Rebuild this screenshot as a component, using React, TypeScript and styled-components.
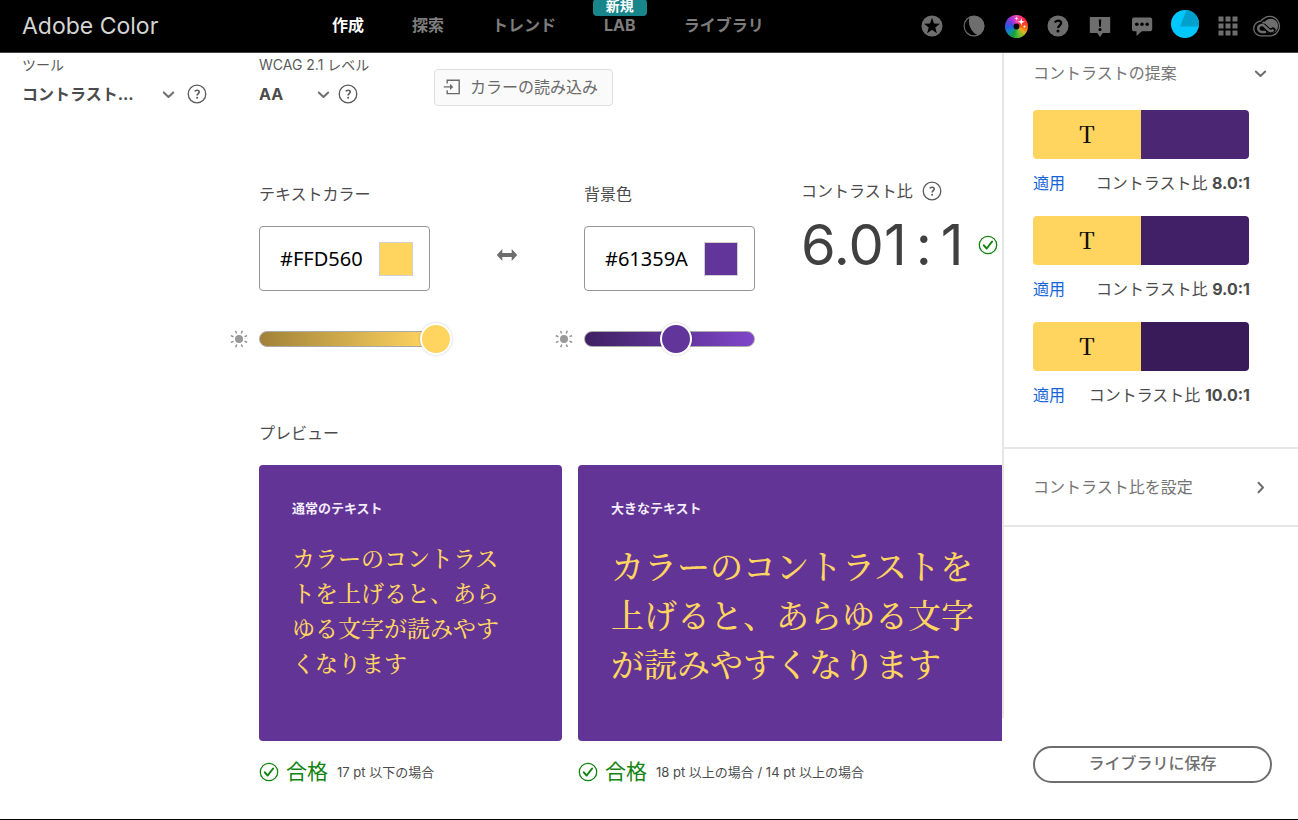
import React, { useState } from "react";
import styled, { createGlobalStyle } from "styled-components";

const sans = `Inter, "Noto Sans CJK JP", sans-serif`;
const mincho = `"Noto Serif CJK JP", "Source Han Serif JP", "Noto Sans CJK JP", serif`;

const GlobalStyle = createGlobalStyle`
  * { box-sizing: border-box; }
  body { margin: 0; background: #fff; color: #4b4b4b; font: 16px/24px ${sans}; }
  button, select, input { font: inherit; color: inherit; }
  button { cursor: pointer; padding: 0; border: 0; background: none; }
  h1, h2, p { margin: 0; font-weight: 400; }
  svg { display: block; flex: none; }
`;

const Page = styled.div`
  display: flex;
  flex-direction: column;
  min-height: 100vh;
  border-bottom: 1px solid #000;
`;

/* Header */

const Header = styled.header`
  display: flex;
  align-items: flex-start;
  height: 53px;
  padding: 0 13px 0 22px;
  overflow: hidden;
  background: #000;
  border-bottom: 1px solid #444;
`;

const Brand = styled.h1`
  flex: 0 0 310px;
  color: #d5d5d5;
  font-size: 23px;
  line-height: 52px;
`;

const Nav = styled.nav`
  display: flex;
  flex: 1;
  gap: 48px;
  height: 50px;
  align-items: center;
`;

const NavLink = styled.a<{ $active?: boolean }>`
  position: relative;
  color: ${(p) => (p.$active ? "#fff" : "#7d7d7d")};
  font-weight: 700;
  text-decoration: none;
  white-space: nowrap;
`;

const Badge = styled.span`
  position: absolute;
  bottom: 21px;
  left: 50%;
  width: 54px;
  margin-left: -27px;
  padding-bottom: 3px;
  border-radius: 4px;
  background: #17858a;
  color: #fff;
  font-size: 14px;
  line-height: 14px;
  text-align: center;
`;

const Actions = styled.div`
  display: flex;
  align-items: center;
  height: 52px;
`;

const ActionButton = styled.button<{ $width?: number }>`
  display: grid;
  place-items: center;
  width: ${(p) => p.$width ?? 42}px;
  height: 44px;
  color: #6e6e6e;
`;

const AvatarButton = styled(ActionButton)`
  padding-bottom: 4px;
`;

const Wheel = styled.span`
  display: block;
  width: 23px;
  height: 23px;
  border-radius: 50%;
  background: conic-gradient(
    #f050b0, #ff2038 50deg, #ff5a10 90deg, #e8b020 125deg,
    #60c030 165deg, #10a040 200deg, #1090b0 230deg, #2060e8 265deg, #6040d8 300deg, #c030d8 335deg, #f050b0
  );
`;

/* Layout */

const Body = styled.div`
  display: flex;
  flex: 1;
`;

const Main = styled.main`
  flex: 1;
  min-width: 0;
  overflow: hidden;
`;

const Toolbar = styled.div`
  display: flex;
  align-items: flex-end;
  padding: 2px 0 0 22px;
`;

const Tool = styled.div<{ $width: number }>`
  flex: 0 0 ${(p) => p.$width}px;
`;

const ToolLabel = styled.label`
  display: block;
  margin-bottom: 7px;
  font-size: 14px;
  line-height: 20px;
  color: #5a5a5a;
`;

const ToolRow = styled.div<{ $gap: number }>`
  display: flex;
  align-items: center;
  gap: ${(p) => p.$gap}px;
`;

const SelectBox = styled.div<{ $width: number }>`
  display: grid;
  align-items: center;
  width: ${(p) => p.$width}px;
  > * { grid-area: 1 / 1; }
  > svg { justify-self: end; pointer-events: none; }
`;

const Select = styled.select`
  width: 100%;
  height: 24px;
  padding: 0;
  border: 0;
  appearance: none;
  background: none;
  font-weight: 700;
`;

const IconButton = styled.button`
  display: grid;
  place-items: center;
  color: #5a5a5a;
`;

const ImportButton = styled.button`
  display: flex;
  align-items: center;
  gap: 9px;
  height: 37px;
  padding: 0 14px 1px 8px;
  border: 1px solid #dedede;
  border-radius: 4px;
  background: #fafafa;
  color: #6a6a6a;
`;

const Workspace = styled.div`
  padding: 76px 0 35px 229px;
`;

const Fields = styled.div`
  display: flex;
  align-items: flex-start;
`;

const Field = styled.div`
  display: grid;
  grid-template-columns: 30px 171px;
  align-items: center;
`;

const FieldLabel = styled.label`
  grid-column: 2;
  margin-bottom: 20px;
`;

const HexBox = styled.div`
  grid-column: 2;
  display: flex;
  align-items: center;
  justify-content: space-between;
  height: 65px;
  margin-bottom: 32px;
  padding: 0 16px 0 20px;
  border: 1px solid #959595;
  border-radius: 4px;
`;

const HexInput = styled.input`
  width: 90px;
  padding: 0;
  border: 0;
  outline: 0;
  background: none;
  color: #000;
  font-family: "Noto Sans", sans-serif;
  font-size: 20px;
`;

const Swatch = styled.span<{ $color: string }>`
  width: 34px;
  height: 34px;
  border: 1px solid #d0d0d0;
  background: ${(p) => p.$color};
`;

const Slider = styled.div`
  display: grid;
  align-items: center;
  > * { grid-area: 1 / 1; }
`;

const Track = styled.span<{ $from: string; $to: string }>`
  height: 16px;
  border: 1px solid #a9a9a9;
  border-radius: 8px;
  background: linear-gradient(90deg, ${(p) => p.$from}, ${(p) => p.$to});
`;

const Range = styled.input<{ $color: string }>`
  width: calc(100% + 22px);
  height: 32px;
  margin: 0;
  appearance: none;
  background: none;
  &::-webkit-slider-thumb {
    appearance: none;
    width: 32px;
    height: 32px;
    border: 2px solid #fff;
    border-radius: 50%;
    background: ${(p) => p.$color};
    box-shadow: 0 0 3px rgba(0, 0, 0, 0.2);
  }
`;

const SwapButton = styled.button`
  display: grid;
  place-items: center;
  flex: 0 0 124px;
  height: 65px;
  margin-top: 40px;
  padding-left: 30px;
  color: #6e6e6e;
`;

const Ratio = styled.div`
  margin: -3px 0 0 46px;
  white-space: nowrap;
`;

const RatioHead = styled.div`
  display: flex;
  align-items: center;
  gap: 9px;
`;

const RatioValue = styled.div`
  display: flex;
  align-items: center;
  gap: 14px;
  margin-top: 7px;
  color: #404040;
  font-size: 56px;
  line-height: 70px;
  font-feature-settings: "calt" 0;
`;

const RatioNumber = styled.span`
  display: flex;
  gap: 9px;
`;

const SectionTitle = styled.h2`
  margin: 66px 0 20px 30px;
  font-size: 16px;
  line-height: 24px;
`;

const Previews = styled.div`
  display: flex;
  gap: 16px;
  padding-left: 30px;
`;

const Preview = styled.section<{ $wide?: boolean }>`
  flex: ${(p) => (p.$wide ? "1 0 456px" : "0 0 303px")};
`;

const Card = styled.div`
  min-height: 276px;
  padding: 33px;
  border-radius: 4px;
  background: #613496;
`;

const CardTitle = styled.p`
  margin-bottom: 22px;
  color: #f3ecfa;
  font-size: 13px;
  line-height: 20px;
  font-weight: 700;
`;

const Sample = styled.p<{ $large?: boolean }>`
  max-width: ${(p) => (p.$large ? 370 : 210)}px;
  color: #ffd560;
  font-family: ${mincho};
  font-size: ${(p) => (p.$large ? 33 : 23)}px;
  line-height: ${(p) => (p.$large ? 49 : 35)}px;
  font-weight: 500;
`;

const Result = styled.div`
  display: flex;
  align-items: center;
  gap: 9px;
  margin-top: 19px;
  font-size: 13px;
`;

const Pass = styled.span`
  display: flex;
  align-items: center;
  gap: 7px;
  color: #12840f;
  font-size: 21px;
`;

/* Side panel */

const Aside = styled.aside`
  display: flex;
  flex-direction: column;
  flex: 0 0 296px;
`;

const Panels = styled.div`
  flex: 1;
  border-left: 2px solid #e6e6e6;
`;

const Panel = styled.section`
  padding: 8px 29px 40px;
  border-bottom: 2px solid #e6e6e6;
`;

const PanelToggle = styled.button<{ $tall?: boolean }>`
  display: flex;
  align-items: center;
  justify-content: space-between;
  width: 100%;
  height: ${(p) => (p.$tall ? 78 : 24)}px;
  padding: ${(p) => (p.$tall ? "0 31px 0 29px" : "0 2px 0 0")};
  border-bottom: ${(p) => (p.$tall ? "2px solid #e6e6e6" : "0")};
  color: #747474;
`;

const Suggestions = styled.ul`
  display: grid;
  gap: 21px;
  width: 217px;
  margin: 25px 0 0;
  padding: 0;
  list-style: none;
`;

const Pair = styled.div<{ $dark: string }>`
  display: grid;
  grid-template-columns: 1fr 1fr;
  width: 216px;
  height: 49px;
  margin-bottom: 12px;
  border-radius: 4px;
  overflow: hidden;
  background: linear-gradient(90deg, #ffd560 50%, ${(p) => p.$dark} 50%);
  color: #111;
  font: 500 23px/48px ${mincho};
  text-align: center;
`;

const PairInfo = styled.div`
  display: flex;
  justify-content: space-between;
`;

const ApplyLink = styled.a`
  color: #1665d8;
  text-decoration: none;
`;

const AsideFooter = styled.div`
  padding: 28px 26px 36px 31px;
`;

const SaveButton = styled.button`
  width: 100%;
  height: 37px;
  padding-bottom: 3px;
  border: 2px solid #6e6e6e;
  border-radius: 19px;
  color: #6e6e6e;
  font-weight: 500;
`;

/* Icons */

const Chevron = ({ right }: { right?: boolean }) => (
  <svg width="13" height="13" viewBox="0 0 13 13" fill="none" stroke="#6e6e6e" strokeWidth="2" strokeLinecap="round" strokeLinejoin="round">
    <path d={right ? "M4.5 1.8 9 6.5 4.5 11.2" : "M1.8 4.5 6.5 9l4.7-4.5"} />
  </svg>
);

const HelpIcon = () => (
  <svg width="20" height="20" viewBox="0 0 20 20" fill="none" stroke="currentColor">
    <circle cx="10" cy="10" r="8.8" strokeWidth="1.3" />
    <path d="M7.7 7.4c.6-.9 1.4-1.2 2.3-1.2 1.3 0 2.2.7 2.2 1.8 0 1.5-2.1 1.6-2.1 3.5" strokeWidth="1.6" />
    <circle cx="10.1" cy="13.8" r="1" fill="currentColor" stroke="none" />
  </svg>
);

const CheckIcon = () => (
  <svg width="20" height="20" viewBox="0 0 20 20" fill="none" stroke="#12840f">
    <circle cx="10" cy="10" r="8.7" strokeWidth="1.3" />
    <path d="m5.8 10.3 2.9 3.2 5.4-7" strokeWidth="2" strokeLinecap="round" strokeLinejoin="round" />
  </svg>
);

const ImportIcon = () => (
  <svg width="18" height="18" viewBox="0 0 18 18" fill="none" stroke="currentColor" strokeWidth="1.4">
    <path d="M4.2 5.6V2.2h12v13.4h-12v-3.4M.8 8.9h6.6" />
    <path d="m7 5.8 3.2 3.1L7 12z" fill="currentColor" stroke="none" />
  </svg>
);

const SunIcon = () => (
  <svg width="20" height="20" viewBox="0 0 20 20" stroke="#8c8c8c" strokeWidth="1.4">
    <circle cx="10" cy="10" r="4" fill="#999" stroke="none" />
    {[22, 67, 112, 157, 202, 247, 292, 337].map((a) => (
      <path key={a} d="M16 10h2.8" transform={`rotate(${a} 10 10)`} />
    ))}
  </svg>
);

const SwapIcon = () => (
  <svg width="22" height="14" viewBox="0 0 22 14" fill="currentColor">
    <path d="M.8 7 6.300 1v4h9.400V1l5.500 6-5.500 6V9H6.300v4z" />
  </svg>
);

const StarIcon = () => (
  <svg width="22" height="22" viewBox="0 0 22 22">
    <circle cx="11" cy="11" r="10.500" fill="currentColor" />
    <path fill="#000" d="m11 2.800 2 5.700 6 .2-4.700 3.700 1.600 5.800-4.900-3.400-4.900 3.400 1.600-5.800L3 8.700l6-.2z" />
  </svg>
);

const MoonIcon = () => (
  <svg width="22" height="22" viewBox="0 0 22 22">
    <circle cx="11" cy="11" r="9.900" fill="none" stroke="currentColor" strokeWidth="1.100" />
    <path fill="currentColor" d="M7 1.400C12 0 21.300 3 21.300 11c0 4.500-3 8-6 9.300C8.500 18 3.500 8 7 1.400z" />
  </svg>
);

const SparkleIcon = () => (
  <svg width="23" height="23" viewBox="0 0 23 23">
    <circle cx="11.500" cy="11.500" r="2.900" fill="#000" />
    <path fill="#fff" d="m16.300 3 .9 2.900 2.900.9-2.900.9-.9 2.900-.9-2.900-2.900-.9 2.900-.9zM11.500 1.500l.5 1.500 1.500.5-1.500.5-.5 1.500-.5-1.500-1.500-.5 1.500-.5zM19.500 9.700l.4 1.400 1.400.4-1.400.4-.4 1.400-.4-1.400-1.400-.4 1.400-.4z" />
  </svg>
);

const HelpSolidIcon = () => (
  <svg width="22" height="22" viewBox="0 0 22 22">
    <circle cx="11" cy="11" r="10.500" fill="currentColor" />
    <path d="M7.900 7.500c.6-1.200 1.700-1.900 3.200-1.900 1.800 0 3 1 3 2.500 0 2.200-3 2.200-3 5" fill="none" stroke="#000" strokeWidth="2.300" />
    <circle cx="11" cy="16" r="1.500" fill="#000" />
  </svg>
);

const AlertIcon = () => (
  <svg width="22" height="22" viewBox="0 0 22 22">
    <path fill="currentColor" d="M1.500 2h19a.7.7 0 0 1 .7.7v14.600a.7.7 0 0 1-.7.7h-6.700L11 22l-2.800-4H1.500a.7.700 0 0 1-.7-.7V2.700A.7.700 0 0 1 1.500 2z" />
    <path d="M9.700 4.500h2.600l-.5 7.200h-1.600z" />
    <circle cx="11" cy="14.600" r="1.500" />
  </svg>
);

const ChatIcon = () => (
  <svg width="22" height="22" viewBox="0 0 22 22">
    <path fill="currentColor" d="M3 2.500h16.200a2 2 0 0 1 2 2v9.800a2 2 0 0 1-2 2h-8.400L5.500 21v-4.700H3a2 2 0 0 1-2-2V4.500a2 2 0 0 1 2-2z" />
    <circle cx="5.800" cy="9.200" r="1.800" />
    <circle cx="11" cy="9.200" r="1.800" />
    <circle cx="16.200" cy="9.200" r="1.800" />
  </svg>
);

const Avatar = () => (
  <svg width="28" height="28" viewBox="0 0 28 28">
    <circle cx="14" cy="14" r="14" fill="#00c8ff" />
    <path fill="#00a0cc" d="M15.500.1A14 14 0 0 1 27.800 16.500H9z" />
  </svg>
);

const AppsIcon = () => (
  <svg width="20" height="20" viewBox="0 0 20 20" fill="currentColor">
    {[0.5, 7.5, 14.5].map((y) => [0.5, 7.5, 14.5].map((x) => <rect key={`${x}-${y}`} x={x} y={y} width="5" height="5" />))}
  </svg>
);

const CloudLogo = () => (
  <svg width="28" height="22" viewBox="0 0 28 22" fill="none" stroke="currentColor" strokeLinecap="round">
    <path d="M10.500 3.700A9.700 9.700 0 1 1 17.600 20.800H8.500A7.300 7.300 0 1 1 7.600 6.200C8.400 5.300 9.300 4.300 10.500 3.700z" strokeWidth="1.300" />
    <circle cx="17.800" cy="11" r="7.300" fill="currentColor" stroke="none" />
    <path d="M12 17.100H8.700a3.700 3.700 0 1 1 2.600-6.300l4 3.900c1.500 1.400 3.400 1.400 4.700.2" stroke="#000" strokeWidth="5" />
    <path d="M12 16.900H8.700a3.500 3.500 0 1 1 2.500-6l4.200 4c1.400 1.300 3 1.500 4.300.5" strokeWidth="2.500" />
    <path d="M10.300 7.700c1.500-.3 2.700.2 3.800 1.300l2.700 2.600" strokeWidth="2" />
  </svg>
);

const suggestions = [
  { ratio: "8.0:1", dark: "#4a2673" },
  { ratio: "9.0:1", dark: "#422067" },
  { ratio: "10.0:1", dark: "#391b59" },
];

type ColorFieldProps = { id: string; label: string; hex: string; from: string; to: string; start: number };

const ColorField = ({ id, label, hex, from, to, start }: ColorFieldProps) => {
  const [value, setValue] = useState(hex);
  const [level, setLevel] = useState(start);
  return (
    <Field>
      <FieldLabel htmlFor={id}>{label}</FieldLabel>
      <HexBox>
        <HexInput id={id} value={value} onChange={(e) => setValue(e.target.value)} />
        <Swatch $color={hex} />
      </HexBox>
      <SunIcon />
      <Slider>
        <Track $from={from} $to={to} />
        <Range type="range" aria-label={`${label} 明るさ`} $color={hex} value={level} onChange={(e) => setLevel(Number(e.target.value))} />
      </Slider>
    </Field>
  );
};

export default function App() {
  return (
    <>
      <GlobalStyle />
      <Page>
        <Header>
          <Brand>Adobe Color</Brand>
          <Nav>
            <NavLink href="#create" $active>作成</NavLink>
            <NavLink href="#explore">探索</NavLink>
            <NavLink href="#trends">トレンド</NavLink>
            <NavLink href="#lab">LAB<Badge>新規</Badge></NavLink>
            <NavLink href="#libraries">ライブラリ</NavLink>
          </Nav>
          <Actions>
            <ActionButton aria-label="お気に入り"><StarIcon /></ActionButton>
            <ActionButton aria-label="テーマ"><MoonIcon /></ActionButton>
            <ActionButton aria-label="カラーホイール"><Wheel><SparkleIcon /></Wheel></ActionButton>
            <ActionButton aria-label="ヘルプ"><HelpSolidIcon /></ActionButton>
            <ActionButton aria-label="お知らせ"><AlertIcon /></ActionButton>
            <ActionButton aria-label="チャット"><ChatIcon /></ActionButton>
            <AvatarButton aria-label="アカウント" $width={44}><Avatar /></AvatarButton>
            <ActionButton aria-label="アプリ"><AppsIcon /></ActionButton>
            <ActionButton aria-label="Creative Cloud" $width={36}><CloudLogo /></ActionButton>
          </Actions>
        </Header>
        <Body>
          <Main>
            <Toolbar>
              <Tool $width={237}>
                <ToolLabel htmlFor="tool">ツール</ToolLabel>
                <ToolRow $gap={12}>
                  <SelectBox $width={153}>
                    <Select id="tool"><option>コントラスト...</option></Select>
                    <Chevron />
                  </SelectBox>
                  <IconButton aria-label="ツールのヘルプ"><HelpIcon /></IconButton>
                </ToolRow>
              </Tool>
              <Tool $width={175}>
                <ToolLabel htmlFor="level">WCAG 2.1 レベル</ToolLabel>
                <ToolRow $gap={8}>
                  <SelectBox $width={71}>
                    <Select id="level"><option>AA</option><option>AAA</option></Select>
                    <Chevron />
                  </SelectBox>
                  <IconButton aria-label="レベルのヘルプ"><HelpIcon /></IconButton>
                </ToolRow>
              </Tool>
              <ImportButton><ImportIcon />カラーの読み込み</ImportButton>
            </Toolbar>
            <Workspace>
              <Fields>
                <ColorField id="text-color" label="テキストカラー" hex="#FFD560" from="#a28239" to="#ffd560" start={100} />
                <SwapButton aria-label="カラーを入れ替え"><SwapIcon /></SwapButton>
                <ColorField id="background-color" label="背景色" hex="#61359A" from="#3f2163" to="#7f45c9" start={47} />
                <Ratio>
                  <RatioHead>コントラスト比<IconButton aria-label="コントラスト比のヘルプ"><HelpIcon /></IconButton></RatioHead>
                  <RatioValue>
                    <RatioNumber><span>6.01</span><span>:</span><span>1</span></RatioNumber>
                    <CheckIcon />
                  </RatioValue>
                </Ratio>
              </Fields>
              <SectionTitle>プレビュー</SectionTitle>
              <Previews>
                <Preview>
                  <Card>
                    <CardTitle>通常のテキスト</CardTitle>
                    <Sample>カラーのコントラストを上げると、あらゆる文字が読みやすくなります</Sample>
                  </Card>
                  <Result><Pass><CheckIcon />合格</Pass>17 pt 以下の場合</Result>
                </Preview>
                <Preview $wide>
                  <Card>
                    <CardTitle>大きなテキスト</CardTitle>
                    <Sample $large>カラーのコントラストを上げると、あらゆる文字が読みやすくなります</Sample>
                  </Card>
                  <Result><Pass><CheckIcon />合格</Pass>18 pt 以上の場合 / 14 pt 以上の場合</Result>
                </Preview>
              </Previews>
            </Workspace>
          </Main>
          <Aside>
            <Panels>
              <Panel>
                <PanelToggle>コントラストの提案<Chevron /></PanelToggle>
                <Suggestions>
                  {suggestions.map((s) => (
                    <li key={s.ratio}>
                      <Pair $dark={s.dark}>T</Pair>
                      <PairInfo>
                        <ApplyLink href="#apply">適用</ApplyLink>
                        <span>コントラスト比 <b>{s.ratio}</b></span>
                      </PairInfo>
                    </li>
                  ))}
                </Suggestions>
              </Panel>
              <PanelToggle $tall>コントラスト比を設定<Chevron right /></PanelToggle>
            </Panels>
            <AsideFooter>
              <SaveButton>ライブラリに保存</SaveButton>
            </AsideFooter>
          </Aside>
        </Body>
      </Page>
    </>
  );
}
